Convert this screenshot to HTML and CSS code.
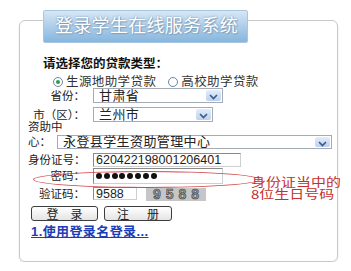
FILE: index.html
```html
<!DOCTYPE html>
<html lang="zh-CN">
<head>
    <meta charset="UTF-8">
    <title>登录学生在线服务系统</title>
    <link rel="stylesheet" href="styles.css">
</head>
<body>
    <div class="panel">
        <div class="tab">登录学生在线服务系统</div>
        <div class="heading">请选择您的贷款类型：</div>

        <!-- loan type -->
        <div class="radios">
            <span class="radio checked"></span><span class="radio-text">生源地助学贷款</span>
            <span class="radio"></span><span class="radio-text">高校助学贷款</span>
        </div>

        <div class="row row-province">
            <span class="label">省份：</span>
            <div class="select w130"><span class="value">甘肃省</span><span class="arrow"><svg width="15" height="13" viewBox="0 0 15 13"><path d="M4 5 L7.5 8.5 L11 5" fill="none" stroke="#3f5a8c" stroke-width="1.7"/></svg></span></div>
        </div>
        <div class="row row-city">
            <span class="label">市（区）：</span>
            <div class="select w120"><span class="value">兰州市</span><span class="arrow"><svg width="15" height="13" viewBox="0 0 15 13"><path d="M4 5 L7.5 8.5 L11 5" fill="none" stroke="#3f5a8c" stroke-width="1.7"/></svg></span></div>
        </div>
        <div class="wrap-line">资助中</div>
        <div class="row row-center">
            <span class="label-short">心：</span>
            <div class="select w275"><span class="value">永登县学生资助管理中心</span><span class="arrow"><svg width="15" height="13" viewBox="0 0 15 13"><path d="M4 5 L7.5 8.5 L11 5" fill="none" stroke="#3f5a8c" stroke-width="1.7"/></svg></span></div>
        </div>
        <div class="row row-id">
            <span class="label">身份证号：</span>
            <div class="input w148">620422198001206401</div>
        </div>
        <div class="row row-pwd">
            <span class="label">密码：</span>
            <div class="input w130 dots">
                <span class="dot"></span><span class="dot"></span><span class="dot"></span><span class="dot"></span>
                <span class="dot"></span><span class="dot"></span><span class="dot"></span><span class="dot"></span>
            </div>
        </div>
        <div class="row row-code">
            <span class="label">验证码：</span>
            <div class="input w44">9588</div>
            <div class="captcha">9588</div>
        </div>
        <div class="buttons">
            <button class="btn btn-login">登　录</button>
            <button class="btn btn-reg">注　册</button>
        </div>
        <a class="link" href="#">1.使用登录名登录...</a>

        <!-- red hand-drawn note -->
        <div class="ellipse"></div>
        <div class="note">身份证当中的<br>8位生日号码</div>
    </div>
</body>
</html>
```

FILE: styles.css
```css
body {
    margin: 0;
    background: #fff;
    font-family: "Liberation Sans", "Noto Sans CJK SC", sans-serif;
    color: #222;
}
.panel {
    position: relative;
    box-sizing: border-box;
    width: 319px;
    height: 242px;
    margin: 20px 0 0 19px;
    padding-left: 8px;
    border: 1px solid #c9c9c9;
    border-radius: 6px;
    box-shadow: 0 1px 2px rgba(0, 0, 0, 0.12);
}
.tab {
    box-sizing: border-box;
    width: 205px;
    height: 33px;
    margin: -11px 0 0 15px;
    padding-left: 11px;
    border: 1px solid #a9c6df;
    border-radius: 2px;
    background: linear-gradient(#d6e7f5, #a9cbe8 55%, #86b6dd);
    color: #fff;
    font-size: 18px;
    line-height: 31px;
    letter-spacing: 0.3px;
    text-shadow: 0 0 2px #6f8fae, 1px 1px 1px #8aa4bc;
}
.heading {
    margin: 14px 0 0 15px;
    font-size: 12.5px;
    font-weight: bold;
    line-height: 15px;
    color: #111;
}
.radios {
    display: flex;
    align-items: center;
    height: 12px;
    margin: 4px 0 0 25px;
    font-size: 12.5px;
    line-height: 12px;
    color: #333;
}
.radio {
    box-sizing: border-box;
    width: 10px;
    height: 10px;
    border: 1px solid #6c87a3;
    border-radius: 50%;
    background: #fff;
    margin-right: 3px;
    position: relative;
}
.radio.checked::after {
    content: "";
    position: absolute;
    left: 2px;
    top: 2px;
    width: 4px;
    height: 4px;
    border-radius: 50%;
    background: #2f9a55;
}
.radio-text {
    margin-right: 12px;
    letter-spacing: 0.4px;
}
.row {
    display: flex;
    align-items: center;
}
.label {
    width: 57px;
    margin-right: 8px;
    text-align: right;
    font-size: 11.5px;
    line-height: 12px;
    white-space: nowrap;
    color: #222;
}
.label-short {
    width: 23px;
    margin-right: 6px;
    font-size: 11.5px;
    line-height: 12px;
}
.row-province { margin-top: 0; height: 15px; }
.row-city { margin-top: 4px; height: 15px; }
.wrap-line {
    height: 10px;
    font-size: 11.5px;
    line-height: 10px;
}
.row-center { margin-top: 3px; height: 14px; }
.row-id { margin-top: 4px; height: 14px; }
.row-pwd { margin-top: 1px; height: 16px; }
.row-code { margin-top: 3px; height: 13px; }

.select {
    box-sizing: border-box;
    display: flex;
    align-items: center;
    height: 100%;
    border: 1px solid #a4abb4;
    background: #fff;
}
.select .value {
    flex: 1;
    padding-left: 5px;
    font-size: 13px;
    line-height: 12px;
    letter-spacing: 0.4px;
    white-space: nowrap;
}
.arrow {
    display: flex;
    width: 15px;
    height: calc(100% - 2px);
    margin-right: 1px;
    border-radius: 2px;
    background: linear-gradient(#e3edfa, #bcd1ef);
}
.w130 { width: 130px; }
.w120 { width: 120px; }
.w275 { width: 275px; }
.w148 { width: 148px; }
.w44 { width: 44px; }

.input {
    box-sizing: border-box;
    height: 100%;
    padding-left: 2px;
    border: 1px solid;
    border-color: #8a8a8a #cfcfcf #cfcfcf #8a8a8a;
    background: #fff;
    font-size: 12.5px;
    line-height: 12px;
    color: #222;
}
.dots {
    display: flex;
    align-items: center;
    gap: 1.8px;
}
.dot {
    width: 6px;
    height: 6px;
    border-radius: 50%;
    background: #111;
}
.captcha {
    width: 60px;
    height: 13px;
    margin: 1px 0 0 9px;
    background: #c6c6c6;
    text-align: center;
    font-size: 14px;
    font-weight: bold;
    line-height: 13px;
    letter-spacing: 5px;
    text-indent: 5px;
    color: #9a9a9a;
    -webkit-text-stroke: 0.6px #3c3c3c;
}
.buttons {
    display: flex;
    gap: 6px;
    margin: 6px 0 0 3px;
    height: 15px;
}
.btn {
    box-sizing: border-box;
    height: 15px;
    padding: 0;
    border: 1px solid #3d3d3d;
    border-radius: 3px;
    background: linear-gradient(#ffffff, #e4e4e4);
    font-family: "Noto Sans CJK SC", sans-serif;
    font-size: 12px;
    line-height: 12px;
    color: #222;
}
.btn-login { width: 67px; }
.btn-reg { width: 68px; letter-spacing: 3px; text-indent: 3px; }
.link {
    display: block;
    margin: 5px 0 0 3px;
    font-size: 13px;
    font-weight: bold;
    line-height: 12px;
    letter-spacing: 0.4px;
    color: #1b3db5;
    text-decoration: underline;
}

/* annotation drawn over the form */
.ellipse {
    position: absolute;
    left: 13px;
    top: 150px;
    width: 225px;
    height: 15px;
    border: 1px solid #d0474a;
    border-radius: 50%;
}
.note {
    position: absolute;
    left: 231px;
    top: 156px;
    font-family: "Noto Sans CJK SC", sans-serif;
    font-size: 15px;
    line-height: 14px;
    white-space: nowrap;
    color: #c4302e;
    transform: scaleY(0.8);
    transform-origin: 0 0;
}
```
